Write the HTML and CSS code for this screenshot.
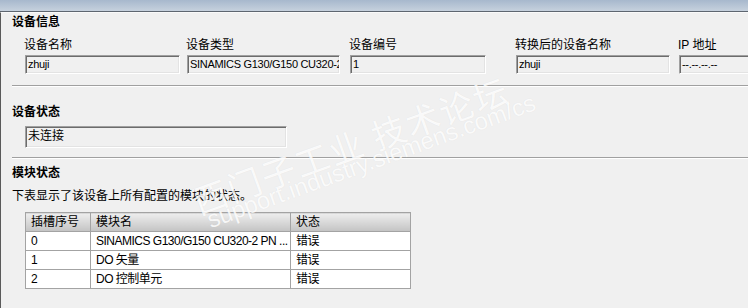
FILE: index.html
```html
<!DOCTYPE html>
<html lang="zh-CN">
<head>
    <meta charset="UTF-8">
    <title>设备信息</title>
    <link rel="stylesheet" href="styles.css">
</head>
<body>
    <div class="screen">
        <div class="titlebar"></div>

        <div class="panel">
            <h2 class="group-title">设备信息</h2>
            <div class="fields">
                <div class="field">
                    <span class="field-label">设备名称</span>
                    <div class="box w-name">zhuji</div>
                </div>
                <div class="field">
                    <span class="field-label">设备类型</span>
                    <div class="box w-type">SINAMICS G130/G150 CU320-2 PN</div>
                </div>
                <div class="field">
                    <span class="field-label">设备编号</span>
                    <div class="box w-num">1</div>
                </div>
                <div class="field">
                    <span class="field-label">转换后的设备名称</span>
                    <div class="box w-conv">zhuji</div>
                </div>
                <div class="field">
                    <span class="field-label">IP 地址</span>
                    <div class="box w-ip">--.--.--.--</div>
                </div>
            </div>

            <div class="divider"></div>

            <h2 class="group-title status-title">设备状态</h2>
            <div class="box box-tall w-status">未连接</div>

            <div class="divider status-divider"></div>

            <h2 class="group-title module-title">模块状态</h2>
            <p class="desc">下表显示了该设备上所有配置的模块的状态。</p>

            <table class="modules">
                <thead>
                    <tr>
                        <th class="col-slot">插槽序号</th>
                        <th class="col-name">模块名</th>
                        <th class="col-state">状态</th>
                    </tr>
                </thead>
                <tbody>
                    <tr>
                        <td>0</td>
                        <td>SINAMICS G130/G150 CU320-2 PN ...</td>
                        <td>错误</td>
                    </tr>
                    <tr>
                        <td>1</td>
                        <td>DO 矢量</td>
                        <td>错误</td>
                    </tr>
                    <tr>
                        <td>2</td>
                        <td>DO 控制单元</td>
                        <td>错误</td>
                    </tr>
                </tbody>
            </table>
        </div>

        <!-- forum watermark over the screenshot -->
        <span class="watermark wm-cn">西门子工业 技术论坛</span>
        <span class="watermark wm-url">support.industry.siemens.com/cs</span>
    </div>
</body>
</html>
```

FILE: styles.css
```css
* {
    margin: 0;
    padding: 0;
    box-sizing: border-box;
}

body {
    font-family: "Liberation Sans", "Noto Sans CJK SC", sans-serif;
    font-size: 12px;
    color: #000;
    background: #f0f0f0;
    overflow: hidden;
}

.screen {
    position: relative;
    width: 748px;
    height: 308px;
    overflow: hidden;
}

.titlebar {
    height: 12px;
    background: linear-gradient(#a7b8cd, #c6d1dd);
    border-bottom: 1px solid #5e6670;
}

.panel {
    height: 296px;
    background: #f0f0f0;
    border-left: 1px solid #5a5a5a;
    border-top: 1px solid #fafafa;
    padding-left: 11px;
}

.group-title {
    font-size: 12px;
    font-weight: bold;
    line-height: 18px;
    height: 18px;
}

.fields {
    display: grid;
    grid-template-columns: 162px 163px 166px 163px 1fr;
    margin: 6px 0 0 12px;
}

.field {
    display: flex;
    flex-direction: column;
    gap: 2px;
}

.field-label {
    line-height: 16px;
    height: 16px;
}

.box {
    height: 19px;
    line-height: 16px;
    margin-left: 1px;
    padding-left: 2px;
    border: 1px solid;
    border-color: #a0a0a0 #ffffff #ffffff #a0a0a0;
    box-shadow: inset 1px 1px 0 #6c6c6c, inset -1px -1px 0 #e3e3e3;
    background: #f0f0f0;
    font-size: 11px;
    letter-spacing: -0.3px;
    white-space: nowrap;
    overflow: hidden;
}

.box-tall {
    height: 22px;
    line-height: 19px;
    margin-left: 13px;
    font-size: 12px;
    letter-spacing: 0;
}

.w-name { width: 155px; }
.w-type { width: 153px; }
.w-num { width: 136px; }
.w-conv { width: 154px; }
.w-ip { width: 100px; }
.w-status { width: 262px; }

.divider {
    height: 2px;
    margin-top: 11px;
    border-top: 1px solid #a0a0a0;
    border-bottom: 1px solid #ffffff;
}

.status-title {
    margin-top: 16px;
    margin-bottom: 5px;
}

.status-divider {
    margin-top: 9px;
}

.module-title {
    margin-top: 5px;
}

.desc {
    line-height: 16px;
    margin-top: 6px;
}

.modules {
    margin: 8px 0 0 13px;
    border-collapse: collapse;
    table-layout: fixed;
    width: 385px;
    background: #ffffff;
}

.modules th,
.modules td {
    height: 19px;
    padding: 0 0 0 5px;
    border: 1px solid #a3a3a3;
    text-align: left;
    font-weight: normal;
    white-space: nowrap;
    overflow: hidden;
    line-height: 17px;
}

.modules td {
    letter-spacing: -0.5px;
}

.modules th {
    background: linear-gradient(#eeeeee, #c3c3c3);
}

.col-slot { width: 65px; }
.col-name { width: 200px; }
.col-state { width: 120px; }

.watermark {
    position: absolute;
    line-height: 1;
    white-space: nowrap;
    color: rgba(255, 255, 255, 0.85);
    text-shadow: 0 0 1px rgba(0, 0, 0, 0.08);
    transform-origin: 0 100%;
    transform: rotate(-20deg);
    pointer-events: none;
}

.wm-cn {
    left: 200px;
    top: 184px;
    font-size: 34px;
    letter-spacing: 2px;
    font-family: "Noto Sans CJK SC", sans-serif;
}

.wm-url {
    left: 212px;
    top: 208px;
    font-size: 24px;
    font-family: "Liberation Sans", sans-serif;
}
```
